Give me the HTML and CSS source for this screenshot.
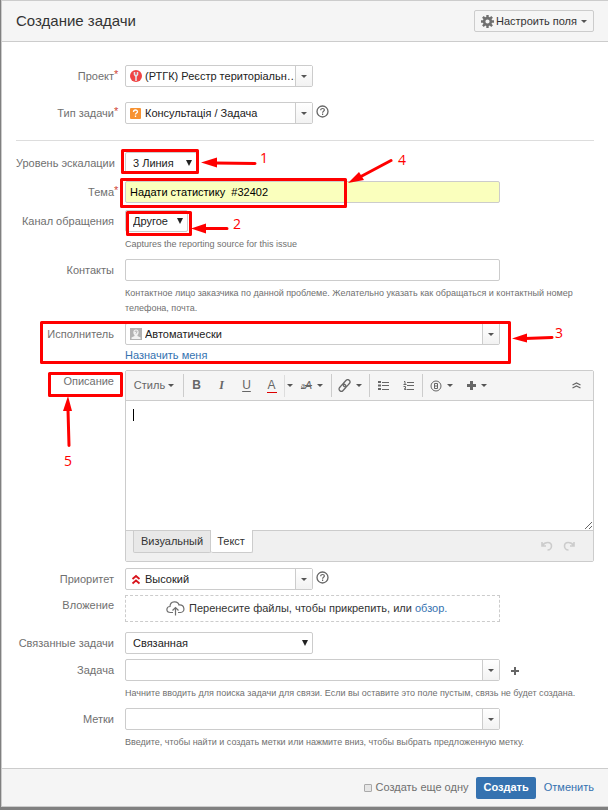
FILE: index.html
```html
<!DOCTYPE html>
<html lang="ru">

<head>
    <meta charset="UTF-8">
    <meta name="viewport" content="width=device-width, initial-scale=1.0">
    <title>Создание задачи</title>
    <link rel="stylesheet" href="styles.css">
</head>

<body>
    <main class="dialog">
        <header class="dialog-header">
            <h1>Создание задачи</h1>
            <button class="config-button" type="button">
                <svg width="13" height="13" viewBox="0 0 13 13">
                    <circle cx="6.500" cy="6.500" r="3.400" fill="none" stroke="#707070" stroke-width="2.600" />
                    <path d="M6.500 0v2.500M6.500 10.500V13M0 6.500h2.500M10.500 6.500H13M1.900 1.900l1.800 1.800M9.300 9.300l1.800 1.800M1.900 11.100l1.800-1.800M9.300 3.700l1.800-1.800" stroke="#707070" stroke-width="2.400" />
                </svg>
                <span>Настроить поля</span>
                <span class="caret"></span>
            </button>
        </header>

        <form class="issue-form">
            <div class="row row-wide">
                <label for="project">Проект<sup>*</sup></label>
                <div class="field">
                    <div class="combo medium">
                        <svg class="combo-icon" width="12" height="12" viewBox="0 0 12 12">
                            <circle cx="6" cy="6" r="6" fill="#f04444" />
                            <path d="M4.500 2v2.500L6 6.500l1.500-2V2M6 6v5" fill="none" stroke="#dfe6ec" stroke-width="1.500" />
                        </svg>
                        <input id="project" type="text" value="(РТГК) Реєстр територіальн…">
                        <button type="button" aria-label="Проект"><span class="caret"></span></button>
                    </div>
                </div>
            </div>
            <div class="row row-wide">
                <label for="type">Тип задачи<sup>*</sup></label>
                <div class="field">
                    <div class="line">
                        <div class="combo medium">
                            <svg class="combo-icon" width="12" height="12" viewBox="0 0 12 12">
                                <rect y="1" width="11" height="11" rx="1" fill="#f79232" />
                                <path d="M3.500 5c0-2.600 4-2.600 4-.3 0 1.300-2 1.300-2 2.800M5.500 8.600v1.400" fill="none" stroke="#fff" stroke-width="1.300" />
                            </svg>
                            <input id="type" type="text" value="Консультація / Задача">
                            <button type="button" aria-label="Тип задачи"><span class="caret"></span></button>
                        </div>
                        <a class="help" href="#" aria-label="Справка">
                            <svg width="13" height="13" viewBox="0 0 13 13" fill="none" stroke="#666">
                                <circle cx="6.500" cy="6.500" r="5.500" stroke-width="1.300" />
                                <path d="M4.700 5.300c0-2.500 3.700-2.300 3.700-.2 0 1.200-1.800 1.300-1.800 2.600M6.600 8.600v1.300" stroke-width="1.200" />
                            </svg>
                        </a>
                    </div>
                </div>
            </div>

            <hr>

            <div class="row">
                <label for="level">Уровень эскалации</label>
                <div class="field">
                    <div class="select select-level">
                        <select id="level">
                            <option>3 Линия</option>
                        </select>
                    </div>
                </div>
            </div>
            <div class="row">
                <label for="summary">Тема<sup>*</sup></label>
                <div class="field">
                    <input class="text highlighted" id="summary" type="text" value="Надати статистику  #32402">
                </div>
            </div>
            <div class="row">
                <label for="channel">Канал обращения</label>
                <div class="field">
                    <div class="select select-channel">
                        <select id="channel">
                            <option>Другое</option>
                        </select>
                    </div>
                    <p class="description">Captures the reporting source for this issue</p>
                </div>
            </div>
            <div class="row">
                <label for="contacts">Контакты</label>
                <div class="field">
                    <input class="text" id="contacts" type="text">
                    <p class="description">Контактное лицо заказчика по данной проблеме. Желательно указать как обращаться и контактный номер телефона, почта.</p>
                </div>
            </div>
            <div class="row">
                <label for="assignee">Исполнитель</label>
                <div class="field">
                    <div class="combo">
                        <svg class="combo-icon" width="12" height="12" viewBox="0 0 12 12">
                            <rect width="12" height="12" fill="#b3b3b3" />
                            <path d="M6 1.500c3.500 0 3 4.500 1.500 5.500v1L10.500 9.500V11h-9V9.500L4.500 8V7C3 6 2.500 1.500 6 1.500z" fill="#f2f2f2" />
                            <path d="M5 4c0-1.400 2-1.400 2-.2 0 .8-1 .8-1 1.800" fill="none" stroke="#aaa" />
                        </svg>
                        <input id="assignee" type="text" value="Автоматически">
                        <button type="button" aria-label="Исполнитель"><span class="caret"></span></button>
                    </div>
                    <a class="assign-me" href="#">Назначить меня</a>
                </div>
            </div>

            <div class="row row-editor">
                <label for="description">Описание</label>
                <div class="field editor">
                    <div class="toolbar">
                        <div class="group">
                            <button class="tool-style" type="button">Стиль<span class="caret"></span></button>
                        </div>
                        <div class="group">
                            <button class="tool bold" type="button">B</button>
                            <button class="tool italic" type="button">I</button>
                            <button class="tool underline" type="button">U</button>
                            <button class="tool color" type="button"><span>A</span></button>
                            <button class="tool-caret" type="button" aria-label="Цвет"><span class="caret"></span></button>
                            <button class="tool-menu" type="button" aria-label="Форматирование">
                                <span class="strike"><small>a</small>A</span>
                                <span class="caret"></span>
                            </button>
                        </div>
                        <div class="group">
                            <button class="tool-menu" type="button" aria-label="Ссылка">
                                <svg width="13" height="13" viewBox="0 0 13 13" fill="none" stroke="#666" stroke-width="1.300">
                                    <g transform="rotate(-48 6.500 6.500)">
                                        <rect x="-.5" y="4.200" width="8" height="4.600" rx="2.300" />
                                        <rect x="5.500" y="4.200" width="8" height="4.600" rx="2.300" />
                                    </g>
                                </svg>
                                <span class="caret"></span>
                            </button>
                        </div>
                        <div class="group">
                            <button class="tool" type="button" aria-label="Список">
                                <svg width="12" height="11" viewBox="0 0 12 11" stroke="#666">
                                    <path d="M0 2h3M0 5.500h3M0 9h3" stroke-width="2" />
                                    <path d="M4 2.500h7M4 5.500h7M4 9.500h7" />
                                </svg>
                            </button>
                            <button class="tool" type="button" aria-label="Нумерованный список">
                                <svg width="12" height="11" viewBox="0 0 12 11" stroke="#666" fill="none">
                                    <path d="M1 1.500h1v3M.5 4.500h3M.5 6.500h2v2h-1v1h2" />
                                    <path d="M4 2.500h7M4 5.500h7M4 9.500h7" />
                                </svg>
                            </button>
                        </div>
                        <div class="group">
                            <button class="tool-menu" type="button" aria-label="Упоминание">
                                <svg width="12" height="12" viewBox="0 0 12 12" fill="none" stroke="#666">
                                    <circle cx="6" cy="6" r="5" />
                                    <path d="M4.500 3.500h3v5h-3zM4.500 6h3" />
                                </svg>
                                <span class="caret"></span>
                            </button>
                            <button class="tool-menu" type="button" aria-label="Вставить">
                                <svg width="9" height="9" viewBox="0 0 9 9" stroke="#666" stroke-width="3">
                                    <path d="M0 4.500h9M4.500 0v9" />
                                </svg>
                                <span class="caret"></span>
                            </button>
                        </div>
                        <button class="tool collapse" type="button" aria-label="Свернуть">
                            <svg width="9" height="7" viewBox="0 0 9 7" fill="none" stroke="#666" stroke-width="1.300">
                                <path d="M.5 3l4-2 4 2M.5 6l4-2 4 2" />
                            </svg>
                        </button>
                    </div>
                    <div class="editor-body">
                        <textarea id="description"></textarea>
                        <span class="text-cursor"></span>
                    </div>
                    <div class="editor-footer">
                        <div class="tabs">
                            <button type="button">Визуальный</button>
                            <button class="active" type="button">Текст</button>
                        </div>
                        <div class="history">
                            <button type="button" aria-label="Отменить">
                                <svg width="12" height="10" viewBox="0 0 12 10" fill="none" stroke="#ccc" stroke-width="1.600">
                                    <path d="M1 1v4h4M1.500 4.500C4 .5 10.500.5 10.500 5c0 2-1.500 4-4 4" />
                                </svg>
                            </button>
                            <button type="button" aria-label="Повторить">
                                <svg width="12" height="10" viewBox="0 0 12 10" fill="none" stroke="#ccc" stroke-width="1.600">
                                    <path d="M11 1v4H7M10.500 4.500C8 .5 1.500.5 1.500 5c0 2 1.500 4 4 4" />
                                </svg>
                            </button>
                        </div>
                    </div>
                </div>
            </div>

            <div class="row row-tight">
                <label for="priority">Приоритет</label>
                <div class="field">
                    <div class="line">
                        <div class="combo medium">
                            <svg class="combo-icon" width="12" height="12" viewBox="0 0 12 12" fill="none" stroke="#d8141c" stroke-width="1.800">
                                <path d="M2.500 6L6 3l3.500 3M2.500 10.500L6 7.500l3.500 3" />
                            </svg>
                            <input id="priority" type="text" value="Высокий">
                            <button type="button" aria-label="Приоритет"><span class="caret"></span></button>
                        </div>
                        <a class="help" href="#" aria-label="Справка">
                            <svg width="13" height="13" viewBox="0 0 13 13" fill="none" stroke="#666">
                                <circle cx="6.500" cy="6.500" r="5.500" stroke-width="1.300" />
                                <path d="M4.700 5.300c0-2.500 3.700-2.300 3.700-.2 0 1.200-1.800 1.300-1.800 2.600M6.600 8.600v1.300" stroke-width="1.200" />
                            </svg>
                        </a>
                    </div>
                </div>
            </div>
            <div class="row row-drop">
                <span class="label">Вложение</span>
                <div class="field">
                    <div class="dropzone">
                        <svg width="19" height="15" viewBox="0 0 19 15" fill="none" stroke="#707070" stroke-width="1.200">
                            <path d="M7 11.500H4.500C-.5 11.500 0 5.500 4 5.500 4-.5 12-.5 13 4c6-.5 6.500 7.500 1.500 7.500H12" />
                            <path d="M9.500 14.500V7M6.500 9.500l3-3 3 3" />
                        </svg>
                        <span>Перенесите файлы, чтобы прикрепить, или <a href="#">обзор.</a></span>
                    </div>
                </div>
            </div>
            <div class="row row-tight">
                <label for="link-type">Связанные задачи</label>
                <div class="field">
                    <div class="select medium">
                        <select id="link-type">
                            <option>Связанная</option>
                        </select>
                    </div>
                </div>
            </div>
            <div class="row">
                <label for="issue">Задача</label>
                <div class="field">
                    <div class="line">
                        <div class="combo">
                            <input id="issue" type="text">
                            <button type="button" aria-label="Задача"><span class="caret"></span></button>
                        </div>
                        <button class="add" type="button" aria-label="Добавить">
                            <svg width="8" height="8" viewBox="0 0 8 8" stroke="#666" stroke-width="2">
                                <path d="M0 4h8M4 0v8" />
                            </svg>
                        </button>
                    </div>
                    <p class="description">Начните вводить для поиска задачи для связи. Если вы оставите это поле пустым, связь не будет создана.</p>
                </div>
            </div>
            <div class="row">
                <label for="labels">Метки</label>
                <div class="field">
                    <div class="combo">
                        <input id="labels" type="text">
                        <button type="button" aria-label="Метки"><span class="caret"></span></button>
                    </div>
                    <p class="description">Введите, чтобы найти и создать метки или нажмите вниз, чтобы выбрать предложенную метку.</p>
                </div>
            </div>
        </form>

        <footer class="dialog-footer">
            <label class="another"><input type="checkbox">Создать еще одну</label>
            <button class="create" type="button">Создать</button>
            <a href="#">Отменить</a>
        </footer>

        <!-- numbered steps over the form -->
        <svg class="steps" width="608" height="500" viewBox="0 0 608 500">
            <g fill="none" stroke="#f00" stroke-width="3" stroke-linejoin="round" stroke-linecap="round">
                <rect x="122.500" y="150.500" width="75" height="22" />
                <rect x="127.500" y="212.500" width="63" height="22" />
                <rect x="121.500" y="179.500" width="224" height="27" />
                <rect x="41.500" y="322.500" width="468" height="40" />
                <rect x="49.500" y="373.500" width="72" height="22" />
                <path d="M215 163l40 .5M205 228.500h22M525 338.500l27-1M360 177l31-16.500M68 410l1 35.500" />
            </g>
            <path fill="#f00" d="M201 162.500l16-5v10zM191 228.500l15-5v10zM512 338.500l15-5v9zM348 183l11-11 5 8zM68 396l-5 15h9z" />
            <g fill="#f00">
                <text x="260" y="163">1</text>
                <text x="233" y="229">2</text>
                <text x="555" y="338">3</text>
                <text x="398" y="165">4</text>
                <text x="64" y="466">5</text>
            </g>
        </svg>
    </main>
</body>

</html>
```

FILE: styles.css
```css
* {
    box-sizing: border-box;
}

body {
    margin: 0;
    background-color: #808080;
    color: #333;
    font-family: "Liberation Sans", Arial, sans-serif;
    font-size: 11px;
    line-height: 15px;
}

button,
input,
select,
textarea {
    margin: 0;
    font: inherit;
    color: inherit;
}

button {
    padding: 0;
    border: 0;
    background: none;
    cursor: pointer;
}

a {
    color: #3572b0;
    text-decoration: none;
}

svg {
    display: block;
    flex: none;
}

.dialog {
    position: relative;
    margin: 0 0 3px 1px;
    border: solid #ccc;
    border-width: 1px 0 1px 1px;
    background-color: #fff;
}

.dialog-header {
    display: flex;
    align-items: center;
    justify-content: space-between;
    height: 41px;
    padding: 0 14px;
    border-bottom: 1px solid #ccc;
    background-color: #f5f5f5;
}

h1 {
    margin: 0;
    font-size: 15px;
    font-weight: normal;
    line-height: 20px;
}

.config-button {
    display: flex;
    align-items: center;
    gap: 2px;
    height: 22px;
    padding: 0 6px;
    border: 1px solid #ccc;
    border-radius: 2px;
}

.caret {
    flex: none;
    border: 3px solid transparent;
    border-top-color: #555;
    border-bottom-width: 0;
}

.config-button .caret {
    margin-left: 2px;
}

.issue-form {
    padding: 23px 14px 11px;
}

.row {
    display: flex;
    gap: 11px;
    margin-bottom: 7px;
}

.row-wide {
    margin-bottom: 15px;
}

.row-editor {
    margin-bottom: 6px;
}

.row-tight {
    margin-bottom: 5px;
}

.row-drop {
    margin-bottom: 10px;
}

.row > label,
.label {
    position: relative;
    flex: none;
    width: 98px;
    color: #707070;
    line-height: 22px;
    text-align: right;
    white-space: nowrap;
}

.row-drop .label {
    line-height: 20px;
}

sup {
    position: absolute;
    top: 0;
    left: 100%;
    color: #d04437;
    font-size: 11px;
    line-height: 18px;
}

.field {
    flex: 1;
    min-width: 0;
}

hr {
    height: 1px;
    margin: 16px 0 11px;
    border: 0;
    background-color: #ddd;
}

.line {
    display: flex;
    gap: 3px;
}

.text,
.combo,
.select {
    width: 100%;
    max-width: 375px;
    height: 22px;
    border: 1px solid #ccc;
    border-radius: 2px;
    background-color: #fff;
}

.text {
    display: block;
    padding: 0 4px;
}

.text.highlighted {
    background-color: #faffbd;
    color: #000;
}

.combo {
    display: flex;
    align-items: center;
}

.combo.medium,
.select.medium {
    max-width: 188px;
}

.combo-icon {
    margin-left: 4px;
}

.combo input {
    flex: 1;
    min-width: 0;
    height: 20px;
    padding: 0 0 0 3px;
    border: 0;
    background: none;
    color: #222;
}

.combo button {
    display: flex;
    align-items: center;
    justify-content: center;
    width: 17px;
    height: 20px;
    border-left: 1px solid #ccc;
    background: linear-gradient(#fff, #f2f2f2);
}

.select {
    display: flex;
    align-items: center;
    padding-right: 4px;
}

.select::after {
    content: "";
    border: 3px solid transparent;
    border-top: 6px solid #222;
    border-bottom: 0;
}

.select select {
    flex: 1;
    min-width: 0;
    height: 20px;
    padding: 0 0 0 7px;
    border: 0;
    background: none;
    color: #222;
    appearance: none;
}

.select-level {
    max-width: 72px;
}

.select-channel {
    max-width: 63px;
}

.description {
    margin: 5px 0 0;
    color: #707070;
    font-size: 9px;
}

.help {
    padding-top: 3px;
}

.add {
    padding: 2px 8px 0;
}

.assign-me {
    display: block;
    margin-top: 3px;
}

.editor {
    border: 1px solid #ccc;
    border-radius: 2px;
}

.toolbar {
    display: flex;
    align-items: center;
    height: 30px;
    border-bottom: 1px solid #ccc;
    background-color: #f5f5f5;
    color: #666;
}

.group {
    display: flex;
    align-items: center;
    height: 23px;
    padding-right: 1px;
    border-right: 1px solid #ccc;
}

.group:nth-of-type(5) {
    border: 0;
}

.group:nth-of-type(4) {
    padding: 0 1px;
}

.toolbar button {
    display: flex;
    align-items: center;
    justify-content: center;
    height: 22px;
}

.toolbar .tool-style {
    gap: 3px;
    width: 56px;
}

.toolbar .tool {
    width: 25px;
    font-size: 12px;
}

.toolbar .bold {
    font-weight: bold;
}

.toolbar .italic {
    font-family: "Liberation Serif", serif;
    font-style: italic;
    font-weight: bold;
}

.toolbar .underline {
    text-decoration: underline;
    text-underline-offset: 2px;
}

.color span {
    width: 10px;
    border-bottom: 1px solid #d00;
    line-height: 14px;
}

.toolbar .tool-caret {
    width: 10px;
    border-left: 1px solid #ddd;
}

.toolbar .tool-menu {
    gap: 5px;
    width: 36px;
}

.strike {
    font-style: italic;
    text-decoration: line-through;
}

.strike small {
    font-size: 7px;
    vertical-align: top;
}

.toolbar .collapse {
    margin-left: auto;
    margin-right: 4px;
}

.editor-body {
    position: relative;
}

textarea {
    display: block;
    width: 100%;
    height: 129px;
    padding: 8px;
    border: 0;
    outline: 0;
    resize: vertical;
}

.text-cursor {
    position: absolute;
    top: 8px;
    left: 7px;
    width: 1px;
    height: 12px;
    background-color: #000;
}

.editor-footer {
    display: flex;
    justify-content: space-between;
    height: 31px;
    padding: 0 18px 0 7px;
    border-top: 1px solid #ccc;
    background-color: #f0f0f0;
}

.tabs {
    display: flex;
}

.tabs button {
    height: 22px;
    padding: 0 7px;
    border: 1px solid #ccc;
    border-top: 0;
    border-radius: 0 0 2px 2px;
    background-color: #e8e8e8;
}

.tabs button.active {
    margin-top: -1px;
    height: 23px;
    padding: 0 7px 0 6px;
    border-left: 0;
    background-color: #fff;
}

.history {
    display: flex;
    align-items: center;
    gap: 10px;
}

.dropzone {
    display: flex;
    align-items: center;
    gap: 4px;
    width: 100%;
    max-width: 375px;
    height: 27px;
    padding-left: 40px;
    border: 1px dashed #ccc;
}

.dialog-footer {
    display: flex;
    align-items: center;
    justify-content: flex-end;
    gap: 8px;
    height: 38px;
    padding: 0 14px;
    border-top: 1px solid #ccc;
    background-color: #f5f5f5;
}

.another {
    display: flex;
    align-items: center;
    gap: 4px;
    color: #707070;
}

.another input {
    width: 8px;
    height: 8px;
    border: 1px solid #aaa;
    border-radius: 1px;
    background-color: #e6e6e6;
    appearance: none;
}

.create {
    height: 22px;
    padding: 0 7px;
    border-radius: 2px;
    background-color: #3572b0;
    color: #fff;
    font-weight: bold;
}

.steps {
    position: absolute;
    top: -1px;
    left: -2px;
    pointer-events: none;
}

.steps text {
    font-family: "Open Sans", sans-serif;
    font-size: 14px;
}
```
